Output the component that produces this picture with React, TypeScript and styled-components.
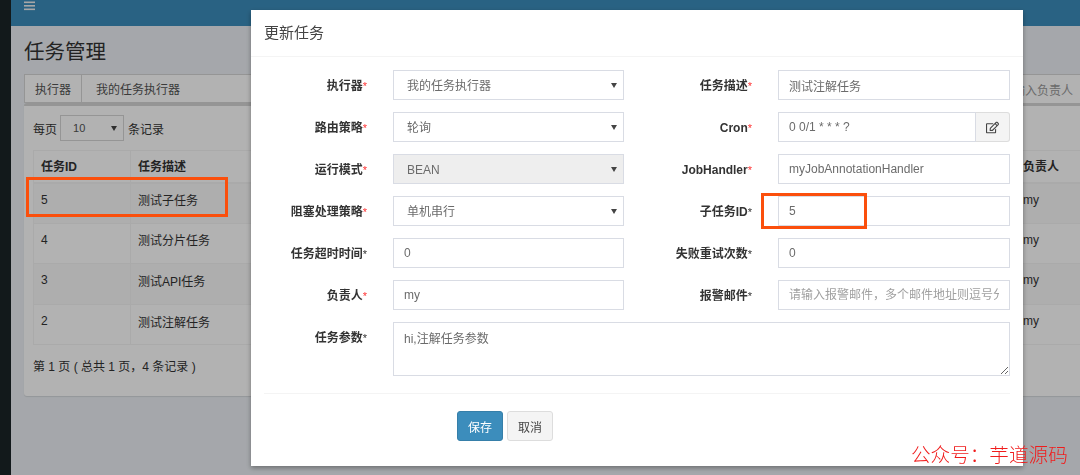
import styled, { createGlobalStyle, css } from "styled-components";
import { FaRegEdit } from "react-icons/fa";

const GlobalStyle = createGlobalStyle`
  html, body {
    margin: 0;
    height: 100%;
    overflow: hidden;
    background: #ecf0f5;
  }
  body, input, select, textarea, button, table {
    font-family: "Liberation Sans", "Noto Sans CJK SC", sans-serif;
    font-size: 12px;
  }
  * {
    box-sizing: border-box;
  }
`;

const arrow = css`
  appearance: none;
  background-image: url("data:image/svg+xml,%3Csvg xmlns='http://www.w3.org/2000/svg' width='6' height='5'%3E%3Cpath d='M0 0h6L3 5z' fill='%23444'/%3E%3C/svg%3E");
  background-repeat: no-repeat;
  background-position: right 6px center;
`;

const Page = styled.div`
  display: flex;
  width: 1080px;
  height: 475px;
  overflow: hidden;
`;

const Sidebar = styled.div`
  flex: 0 0 11px;
  background: #1b2428;
`;

const Main = styled.div`
  flex: 1;
  min-width: 0;
  display: flex;
  flex-direction: column;
`;

const TopBar = styled.div`
  flex: 0 0 26px;
  background: #3c8dbc;
  padding-left: 13px;
  overflow: hidden;
`;

const Content = styled.div`
  flex: 1;
  padding: 13px 0 0 13px;
`;

const Title = styled.h1`
  margin: 0 0 9px;
  font-size: 20.5px;
  line-height: 26px;
  font-weight: 400;
  color: #333;
`;

const FilterBar = styled.div`
  display: flex;
  width: 1090px;
  height: 29px;
  color: #555;
`;

const FilterAddon = styled.div`
  width: 58px;
  display: flex;
  align-items: center;
  justify-content: center;
  background: #fff;
  border: 1px solid #d6d6d6;
`;

const FilterValue = styled.div`
  width: 300px;
  display: flex;
  align-items: center;
  padding-left: 14px;
  background: #fff;
  border: 1px solid #d6d6d6;
  border-left: 0;
`;

const FilterOwner = styled.div`
  flex: 1;
  display: flex;
  align-items: center;
  padding-left: 619px;
  color: #999;
  background: #fff;
  border-top: 1px solid #d6d6d6;
`;

const Card = styled.section`
  width: 1090px;
  height: 293px;
  padding: 9px;
  background: #fff;
  border-top: 3px solid #d6d6d6;
  border-radius: 3px;
  box-shadow: 0 1px 1px rgba(0, 0, 0, 0.1);
  color: #333;
`;

const PageSize = styled.div`
  display: flex;
  align-items: center;
  gap: 4px;
  height: 26px;
  margin-bottom: 9px;
`;

const PageSizeSelect = styled.select`
  ${arrow}
  width: 64px;
  height: 26px;
  margin-left: -1px;
  padding-left: 12px;
  font-size: 11px;
  color: #555;
  background-color: #fff;
  border: 1px solid #d6d6d6;
  border-radius: 0;
`;

const Table = styled.table`
  width: 1072px;
  table-layout: fixed;
  border-collapse: collapse;
  border: 1px solid #f4f4f4;
`;

const HeadCell = styled.th`
  height: 32px;
  padding: 0 7px 2px;
  text-align: left;
  font-weight: 700;
  border: 1px solid #f4f4f4;
  border-bottom-width: 2px;
`;

const Row = styled.tr<{ $odd: boolean }>`
  background: ${(p) => (p.$odd ? "#f9f9f9" : "#fff")};
`;

const Cell = styled.td`
  height: 40.6px;
  padding: 0 7px 7px;
  border: 1px solid #f4f4f4;
`;

const PageInfo = styled.div`
  margin-top: 14px;
  line-height: 17px;
`;

const Backdrop = styled.div`
  position: fixed;
  inset: 0;
  background: rgba(0, 0, 0, 0.3);
`;

const Modal = styled.div`
  position: fixed;
  left: 251px;
  top: 10px;
  width: 772px;
  height: 456px;
  background: #fff;
  box-shadow: 0 2px 5px rgba(0, 0, 0, 0.35);
`;

const ModalHeader = styled.h4`
  margin: 0;
  height: 47px;
  padding-left: 13px;
  font-size: 15px;
  line-height: 46px;
  font-weight: 400;
  color: #444;
  border-bottom: 1px solid #f4f4f4;
`;

const ModalBody = styled.div`
  padding: 13px 13px 0;
`;

const FormGrid = styled.div`
  display: grid;
  grid-template-columns: 129px 231px 154px 232px;
  grid-auto-rows: 30px;
  row-gap: 12px;
`;

const Label = styled.label`
  padding: 2px 26px 0 0;
  text-align: right;
  line-height: 29px;
  font-weight: 700;
  color: #333;
`;

const Star = styled.span<{ $red?: boolean }>`
  font-weight: 400;
  font-size: 11px;
  color: ${(p) => (p.$red ? "#f33" : "#333")};
`;

const Select = styled.select`
  ${arrow}
  width: 100%;
  height: 30px;
  padding: 2px 0 0 13px;
  color: #6b6b6b;
  background-color: ${(p) => (p.disabled ? "#eee" : "#fff")};
  border: 1px solid #d9dce4;
  border-radius: 0;
  opacity: 1;
`;

const Input = styled.input`
  width: 100%;
  height: 30px;
  padding: 0 10px;
  color: #6b6b6b;
  background: #fff;
  border: 1px solid #d9dce4;
  border-radius: 0;
  outline: 0;

  &::placeholder {
    color: #a0a0a0;
  }
`;

const InputGroup = styled.div`
  display: flex;
`;

const AddonButton = styled.button`
  flex: 0 0 34px;
  height: 30px;
  padding: 0;
  display: flex;
  align-items: center;
  justify-content: center;
  color: #444;
  background: #f4f4f4;
  border: 1px solid #ddd;
  border-left: 0;
  border-radius: 0 3px 3px 0;
`;

const TextArea = styled.textarea`
  grid-column: 2 / 5;
  height: 54px;
  padding: 6px 10px;
  color: #6b6b6b;
  background: #fff;
  border: 1px solid #d9dce4;
  border-radius: 0;
  outline: 0;
`;

const Divider = styled.hr`
  margin: 41px 0 17px;
  border: 0;
  border-top: 1px solid #f4f4f4;
`;

const Actions = styled.div`
  display: flex;
  gap: 4px;
  padding-left: 193px;
`;

const Button = styled.button<{ $primary?: boolean }>`
  width: 46px;
  height: 30px;
  padding: 0;
  color: ${(p) => (p.$primary ? "#fff" : "#444")};
  background: ${(p) => (p.$primary ? "#3c8dbc" : "#f4f4f4")};
  border: 1px solid ${(p) => (p.$primary ? "#367fa9" : "#ddd")};
  border-radius: 3px;
`;

const Marker = styled.div<{ $left: number; $top: number; $width: number; $height: number }>`
  position: fixed;
  left: ${(p) => p.$left}px;
  top: ${(p) => p.$top}px;
  width: ${(p) => p.$width}px;
  height: ${(p) => p.$height}px;
  border: 3px solid #fb4f0c;
`;

const Watermark = styled.div`
  position: fixed;
  left: 911px;
  top: 441px;
  font-family: "Noto Sans CJK SC", sans-serif;
  font-size: 19.6px;
  line-height: 26px;
  font-weight: 300;
  color: #f01c1c;
  white-space: nowrap;
`;

const rows = [
  { id: 5, desc: "测试子任务" },
  { id: 4, desc: "测试分片任务" },
  { id: 3, desc: "测试API任务" },
  { id: 2, desc: "测试注解任务" },
];

function BarsIcon() {
  return (
    <svg width="11" height="10" viewBox="0 0 11 10" fill="#f0f0f0">
      <rect y="0.5" width="11" height="1.6" />
      <rect y="4" width="11" height="1.6" />
      <rect y="7.5" width="11" height="1.6" />
    </svg>
  );
}

function Field({ label, red }: { label: string; red?: boolean }) {
  return (
    <Label>
      {label}
      <Star $red={red}>*</Star>
    </Label>
  );
}

export default function App() {
  return (
    <>
      <GlobalStyle />
      <Page>
        <Sidebar />
        <Main>
          <TopBar>
            <BarsIcon />
          </TopBar>
          <Content>
            <Title>任务管理</Title>
            <FilterBar>
              <FilterAddon>执行器</FilterAddon>
              <FilterValue>我的任务执行器</FilterValue>
              <FilterOwner>请输入负责人</FilterOwner>
            </FilterBar>
            <Card>
              <PageSize>
                每页
                <PageSizeSelect defaultValue="10">
                  <option>10</option>
                </PageSizeSelect>
                条记录
              </PageSize>
              <Table>
                <colgroup>
                  <col width="97" />
                  <col width="885" />
                  <col />
                </colgroup>
                <thead>
                  <tr>
                    <HeadCell>任务ID</HeadCell>
                    <HeadCell>任务描述</HeadCell>
                    <HeadCell>负责人</HeadCell>
                  </tr>
                </thead>
                <tbody>
                  {rows.map((r, i) => (
                    <Row key={r.id} $odd={i % 2 === 0}>
                      <Cell>{r.id}</Cell>
                      <Cell>{r.desc}</Cell>
                      <Cell>my</Cell>
                    </Row>
                  ))}
                </tbody>
              </Table>
              <PageInfo>第 1 页 ( 总共 1 页，4 条记录 )</PageInfo>
            </Card>
          </Content>
        </Main>
      </Page>
      <Backdrop />
      <Modal>
        <ModalHeader>更新任务</ModalHeader>
        <ModalBody>
          <FormGrid>
            <Field label="执行器" red />
            <Select defaultValue="我的任务执行器">
              <option>我的任务执行器</option>
            </Select>
            <Field label="任务描述" red />
            <Input defaultValue="测试注解任务" />

            <Field label="路由策略" red />
            <Select defaultValue="轮询">
              <option>轮询</option>
            </Select>
            <Field label="Cron" red />
            <InputGroup>
              <Input defaultValue="0 0/1 * * * ?" />
              <AddonButton>
                <FaRegEdit size={13} />
              </AddonButton>
            </InputGroup>

            <Field label="运行模式" red />
            <Select disabled defaultValue="BEAN">
              <option>BEAN</option>
            </Select>
            <Field label="JobHandler" red />
            <Input defaultValue="myJobAnnotationHandler" />

            <Field label="阻塞处理策略" red />
            <Select defaultValue="单机串行">
              <option>单机串行</option>
            </Select>
            <Field label="子任务ID" />
            <Input defaultValue="5" />

            <Field label="任务超时时间" />
            <Input defaultValue="0" />
            <Field label="失败重试次数" />
            <Input defaultValue="0" />

            <Field label="负责人" red />
            <Input defaultValue="my" />
            <Field label="报警邮件" />
            <Input placeholder="请输入报警邮件，多个邮件地址则逗号分隔" />

            <Field label="任务参数" />
            <TextArea defaultValue="hi,注解任务参数" />
          </FormGrid>
          <Divider />
          <Actions>
            <Button $primary>保存</Button>
            <Button>取消</Button>
          </Actions>
        </ModalBody>
      </Modal>
      <Marker $left={26} $top={177} $width={202} $height={40} />
      <Marker $left={761} $top={193} $width={106} $height={36} />
      <Watermark>公众号：芋道源码</Watermark>
    </>
  );
}
